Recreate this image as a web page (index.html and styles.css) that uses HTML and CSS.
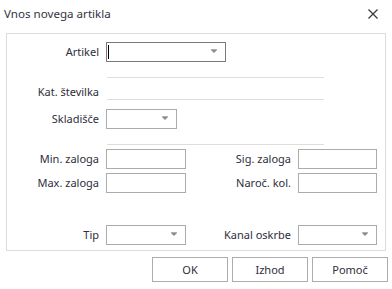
FILE: index.html
```html
<!DOCTYPE html>
<html lang="sl">
<head>
    <meta charset="UTF-8">
    <title>Vnos novega artikla</title>
    <link rel="stylesheet" href="styles.css">
</head>
<body>

<div class="dialog">
    <div class="title-bar">
        <span class="title">Vnos novega artikla</span>
        <svg class="close" width="10" height="10" viewBox="0 0 10 10">
            <path d="M0.5 0.5 L9.5 9.5 M9.5 0.5 L0.5 9.5" stroke="#3a3a3a" stroke-width="1.3" fill="none"/>
        </svg>
    </div>

    <div class="panel">
        <div class="row row-artikel">
            <label class="lbl">Artikel</label>
            <div class="combo combo-wide focused"><span class="caret"></span><span class="arrow"></span></div>
        </div>

        <div class="sep sep-first"></div>

        <div class="row row-kat">
            <label class="lbl">Kat. številka</label>
            <div class="flat-field"></div>
        </div>

        <div class="row row-sklad">
            <label class="lbl">Skladišče</label>
            <div class="combo combo-small"><span class="arrow"></span></div>
        </div>

        <div class="sep sep-second"></div>

        <div class="grid">
            <label class="lbl">Min. zaloga</label>
            <div class="box"></div>
            <label class="lbl">Sig. zaloga</label>
            <div class="box"></div>

            <label class="lbl">Max. zaloga</label>
            <div class="box"></div>
            <label class="lbl">Naroč. kol.</label>
            <div class="box"></div>
        </div>

        <div class="grid grid-tip">
            <label class="lbl">Tip</label>
            <div class="combo"><span class="arrow"></span></div>
            <label class="lbl">Kanal oskrbe</label>
            <div class="combo"><span class="arrow"></span></div>
        </div>
    </div>

    <div class="buttons">
        <button class="btn">OK</button>
        <button class="btn">Izhod</button>
        <button class="btn">Pomoč</button>
    </div>
</div>

</body>
</html>
```

FILE: styles.css
```css
body {
    margin: 0;
    background-color: #ffffff;
    font-family: "Noto Sans", "Open Sans", sans-serif;
    font-size: 11px;
    color: #2e2e3a;
}
.dialog {
    width: 392px;
    height: 289px;
}
.title-bar {
    height: 33px;
    display: flex;
    align-items: flex-start;
    justify-content: space-between;
}
.title {
    font-size: 11.6px;
    line-height: 16px;
    padding: 6px 0 0 4px;
    color: #333340;
}
.close {
    margin: 9px 14px 0 0;
}

/* Main panel with the form */
.panel {
    margin: 0 6px;
    border: 1px solid #dcdcdc;
    height: 216px;
}
.row {
    display: flex;
    align-items: center;
}
.lbl {
    width: 92px;
    padding-right: 7px;
    text-align: right;
    line-height: 16px;
    white-space: nowrap;
}
.row-artikel {
    margin-top: 8px;
    height: 20px;
}
.sep {
    margin-left: 100px;
    width: 217px;
    border-top: 1px solid #dedede;
}
.sep-first {
    margin-top: 15px;
}
.row-kat {
    height: 22px;
    align-items: flex-end;
}
.row-kat .lbl {
    padding-bottom: 0;
}
.flat-field {
    width: 217px;
    margin-left: 1px;
    border-bottom: 1px solid #dedede;
    height: 22px;
    box-sizing: border-box;
}
.row-sklad {
    margin-top: 9px;
    height: 20px;
}
.sep-second {
    margin-top: 15px;
}

/* Inputs */
.combo, .box {
    position: relative;
    height: 20px;
    box-sizing: border-box;
    border: 1px solid #ababab;
    background-color: #ffffff;
}
.combo-wide {
    width: 120px;
}
.combo-small {
    width: 71px;
}
.focused {
    border-color: #7a7a7a;
}
.caret {
    position: absolute;
    left: 1px;
    top: 2px;
    width: 1px;
    height: 14px;
    background-color: #000000;
}
.arrow {
    position: absolute;
    right: 8px;
    top: 7px;
    width: 0;
    height: 0;
    border-left: 3px solid transparent;
    border-right: 3px solid transparent;
    border-top: 3px solid #8a8a8a;
}
.arrow::before {
    content: "";
    position: absolute;
    left: -3px;
    top: -4px;
    width: 6px;
    height: 1px;
    background-color: #b0b0b0;
}

.grid {
    display: grid;
    grid-template-columns: 99px 80px 112px 79px;
    grid-auto-rows: 20px;
    row-gap: 4px;
    align-items: center;
    margin-top: 4px;
}
.grid .lbl {
    width: auto;
}
.grid-tip {
    margin-top: 32px;
}

/* Bottom buttons */
.buttons {
    display: flex;
    justify-content: flex-end;
    gap: 4px;
    margin: 6px 4px 0 0;
}
.btn {
    width: 76px;
    height: 25px;
    background-color: #ffffff;
    border: 1px solid #adadad;
    font-family: "Noto Sans", "Open Sans", sans-serif;
    font-size: 11px;
    color: #2e2e3a;
    padding: 0;
}
```
